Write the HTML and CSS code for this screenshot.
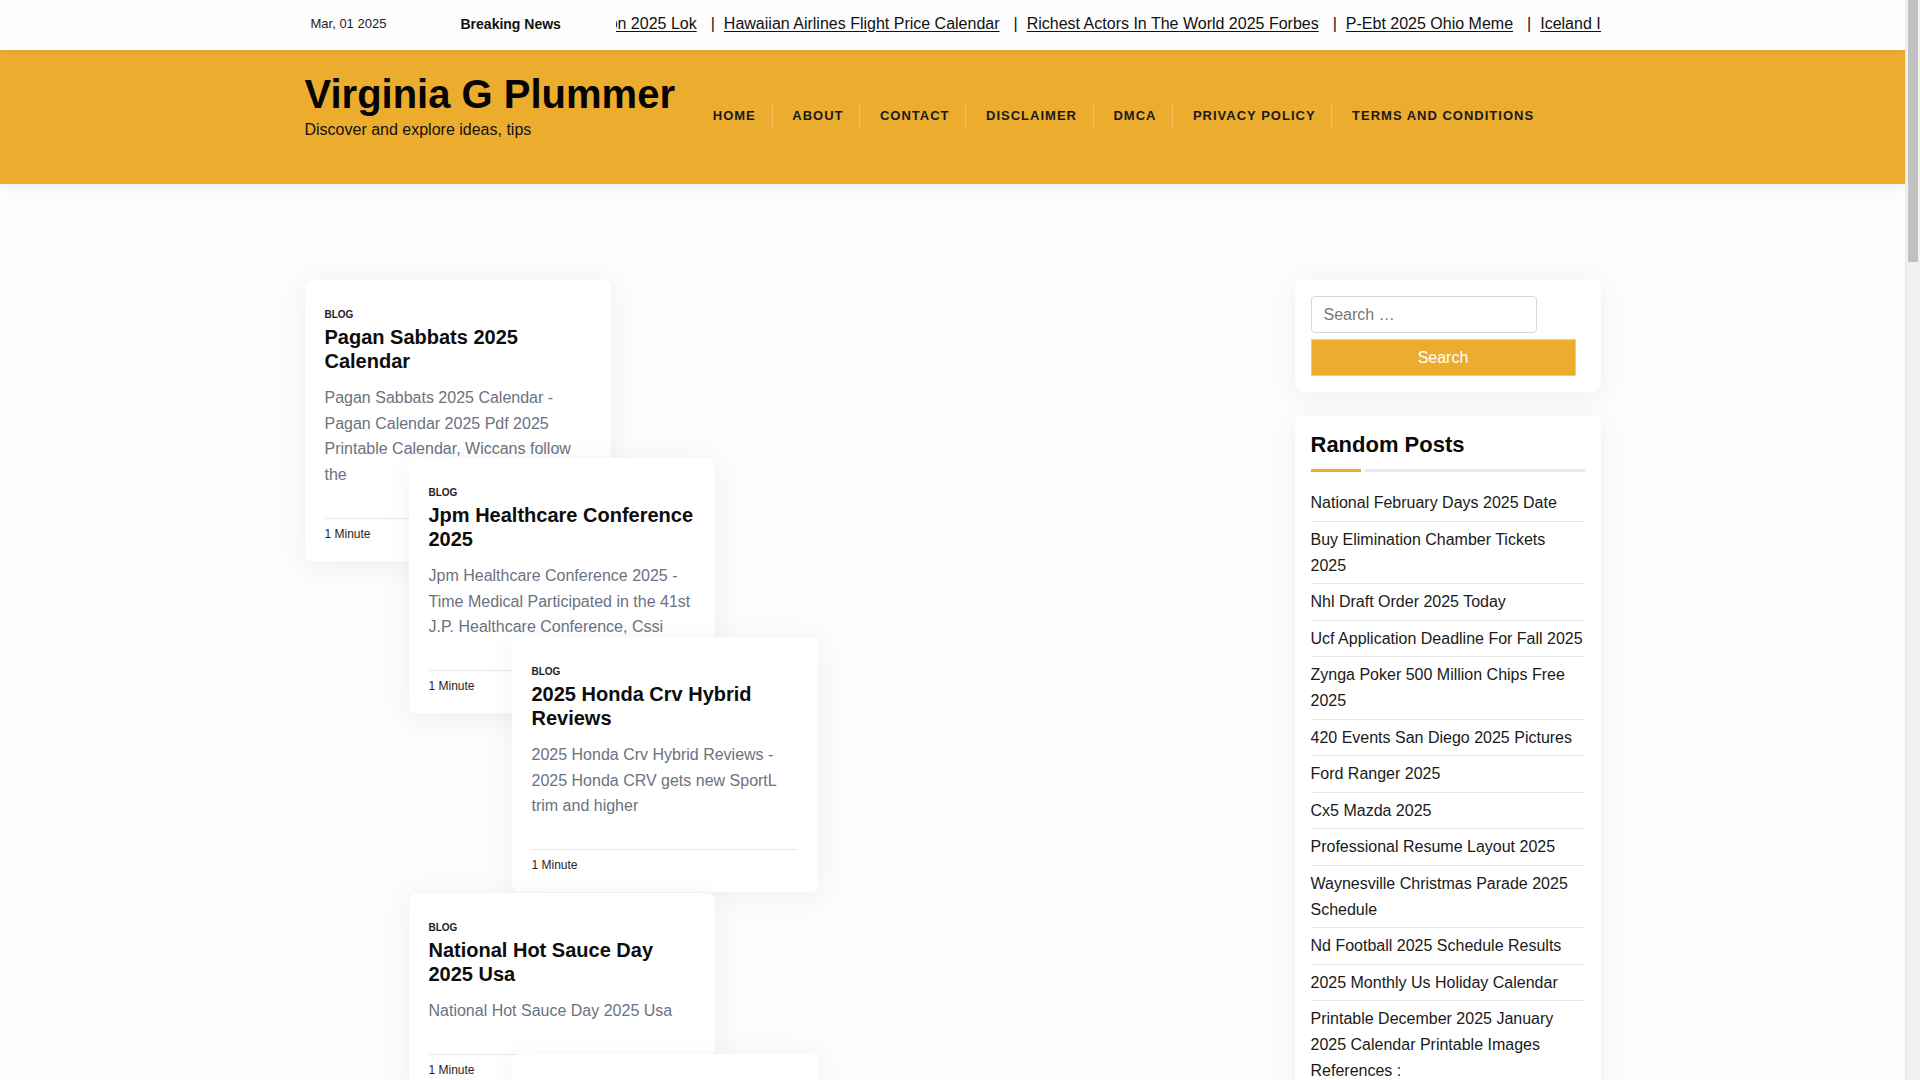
FILE: index.html
```html
<!DOCTYPE html>
<html lang="en">
<head>
<meta charset="utf-8">
<title>Virginia G Plummer</title>
<link rel="stylesheet" href="styles.css">
</head>
<body>
<div class="topbar">
  <div class="container topbar-inner">
    <div class="date">Mar, 01 2025</div>
    <div class="breaking">Breaking News</div>
    <div class="ticker">
      <ul class="ticker-list">
        <li><a href="#">Election 2025 Lok</a><span class="sep">|</span></li>
        <li><a href="#">Hawaiian Airlines Flight Price Calendar</a><span class="sep">|</span></li>
        <li><a href="#">Richest Actors In The World 2025 Forbes</a><span class="sep">|</span></li>
        <li><a href="#">P-Ebt 2025 Ohio Meme</a><span class="sep">|</span></li>
        <li><a href="#">Iceland In Winter 2025</a><span class="sep">|</span></li>
      </ul>
    </div>
  </div>
</div>

<header class="site-header">
  <div class="container header-inner">
    <div class="branding">
      <h1 class="site-title"><a href="#">Virginia G Plummer</a></h1>
      <p class="tagline">Discover and explore ideas, tips</p>
    </div>
    <nav class="main-nav">
      <ul class="menu">
        <li><a href="#">Home</a></li>
        <li><a href="#">About</a></li>
        <li><a href="#">Contact</a></li>
        <li><a href="#">Disclaimer</a></li>
        <li><a href="#">DMCA</a></li>
        <li><a href="#">Privacy Policy</a></li>
        <li><a href="#">Terms and Conditions</a></li>
      </ul>
    </nav>
  </div>
</header>

<div class="container content">
  <main class="posts">
    <article class="card card-1">
      <div class="cat">Blog</div>
      <h2 class="card-title"><a href="#">Pagan Sabbats 2025 Calendar</a></h2>
      <p class="excerpt">Pagan Sabbats 2025 Calendar - Pagan Calendar 2025 Pdf 2025 Printable Calendar, Wiccans follow the</p>
      <div class="card-foot">1 Minute</div>
    </article>
    <article class="card card-2">
      <div class="cat">Blog</div>
      <h2 class="card-title"><a href="#">Jpm Healthcare Conference 2025</a></h2>
      <p class="excerpt">Jpm Healthcare Conference 2025 - Time Medical Participated in the 41st J.P. Healthcare Conference, Cssi</p>
      <div class="card-foot">1 Minute</div>
    </article>
    <article class="card card-3">
      <div class="cat">Blog</div>
      <h2 class="card-title"><a href="#">2025 Honda Crv Hybrid Reviews</a></h2>
      <p class="excerpt">2025 Honda Crv Hybrid Reviews - 2025 Honda CRV gets new SportL trim and higher</p>
      <div class="card-foot">1 Minute</div>
    </article>
    <article class="card card-4">
      <div class="cat">Blog</div>
      <h2 class="card-title"><a href="#">National Hot Sauce Day 2025 Usa</a></h2>
      <p class="excerpt">National Hot Sauce Day 2025 Usa</p>
      <div class="card-foot">1 Minute</div>
    </article>
    <article class="card card-5">
      <div class="cat">Blog</div>
      <h2 class="card-title"><a href="#">Best Time To Visit Japan 2025</a></h2>
      <p class="excerpt">Best Time To Visit Japan 2025 - Cherry blossom forecast and travel tips for the</p>
      <div class="card-foot">1 Minute</div>
    </article>
  </main>

  <aside class="sidebar">
    <section class="widget search-widget">
      <form class="search-form">
        <input class="search-field" type="search" placeholder="Search …">
        <button class="search-submit" type="button">Search</button>
      </form>
    </section>
    <section class="widget posts-widget">
      <h2 class="widget-title">Random Posts</h2>
      <div class="title-bar"><span class="bar-accent"></span><span class="bar-rest"></span></div>
      <ul class="post-list">
        <li><a href="#">National February Days 2025 Date</a></li>
        <li><a href="#">Buy Elimination Chamber Tickets 2025</a></li>
        <li><a href="#">Nhl Draft Order 2025 Today</a></li>
        <li><a href="#">Ucf Application Deadline For Fall 2025</a></li>
        <li><a href="#">Zynga Poker 500 Million Chips Free 2025</a></li>
        <li><a href="#">420 Events San Diego 2025 Pictures</a></li>
        <li><a href="#">Ford Ranger 2025</a></li>
        <li><a href="#">Cx5 Mazda 2025</a></li>
        <li><a href="#">Professional Resume Layout 2025</a></li>
        <li><a href="#">Waynesville Christmas Parade 2025 Schedule</a></li>
        <li><a href="#">Nd Football 2025 Schedule Results</a></li>
        <li><a href="#">2025 Monthly Us Holiday Calendar</a></li>
        <li><a href="#">Printable December 2025 January 2025 Calendar Printable Images References :</a></li>
        <li><a href="#">Chinese New Year 2025 Animal</a></li>
      </ul>
    </section>
  </aside>
</div>

<div class="fake-scrollbar"><div class="fake-thumb"></div></div>
</body>
</html>
```

FILE: styles.css
```css
* {
  box-sizing: border-box;
}

html {
  scrollbar-width: none;
}

html::-webkit-scrollbar {
  display: none;
}

html, body {
  margin: 0;
  padding: 0;
}

body {
  background: #fcfcfc;
  color: #222;
  font-family: "Liberation Sans", Arial, Helvetica, sans-serif;
  font-size: 16px;
  padding-right: 15px;
}

a {
  color: inherit;
  text-decoration: none;
}

ul {
  list-style: none;
  margin: 0;
  padding: 0;
}

.container {
  width: 1296px;
  margin: 0 auto;
}

/* ---------- window scrollbar (drawn) ---------- */
.fake-scrollbar {
  position: fixed;
  top: 0;
  right: 0;
  width: 15px;
  height: 100vh;
  background: #f1f1f1;
  border-left: 1px solid #e8e8e8;
  z-index: 10;
}

.fake-thumb {
  margin: 0 2px 0 2px;
  height: 262px;
  background: #c1c1c1;
}

/* ---------- top bar ---------- */
.topbar {
  background: #fdfdfd;
  height: 50px;
  position: relative;
  z-index: 2;
  box-shadow: 0 1px 4px rgba(0, 0, 0, 0.06);
}

.topbar-inner {
  display: flex;
  align-items: center;
  height: 47px;
}

.date {
  width: 156px;
  padding-left: 6px;
  font-size: 13px;
  color: #222;
  flex-shrink: 0;
}

.breaking {
  width: 155px;
  font-size: 14px;
  font-weight: 700;
  color: #111;
  flex-shrink: 0;
}

.ticker {
  flex: 1;
  overflow: hidden;
  white-space: nowrap;
}

.ticker-list {
  display: flex;
  transform: translateX(-46px);
}

.ticker-list li {
  display: flex;
  align-items: center;
  flex-shrink: 0;
  font-size: 16px;
  color: #111;
}

.ticker-list a {
  text-decoration: underline;
  text-underline-offset: 2px;
}

.sep {
  margin: 0 9px 0 14px;
}

/* ---------- header ---------- */
.site-header {
  background: #ecac2e;
  position: relative;
  z-index: 1;
  box-shadow: 0 3px 10px rgba(0, 0, 0, 0.06);
}

.header-inner {
  display: flex;
  align-items: center;
  height: 134px;
}

.branding {
  padding-bottom: 23px;
}

.site-title {
  margin: 0;
  font-size: 40px;
  line-height: 48px;
  font-weight: 700;
  color: #050505;
}

.tagline {
  margin: 0;
  font-size: 16px;
  line-height: 24px;
  color: #111;
}

.main-nav {
  margin-left: 18px;
  padding-bottom: 3px;
}

.menu {
  display: flex;
  align-items: center;
}

.menu li {
  height: 25px;
  display: flex;
  align-items: center;
  padding: 0 15.75px 0 19.75px;
  border-left: 1px solid rgba(255, 255, 255, 0.25);
}

.menu li:first-child {
  border-left: 0;
}

.menu a {
  font-size: 13px;
  font-weight: 700;
  letter-spacing: 1px;
  text-transform: uppercase;
  color: #1a1a1a;
}

/* ---------- content ---------- */
.content {
  display: flex;
  justify-content: space-between;
  align-items: flex-start;
  margin-top: 96px;
  padding-bottom: 80px;
}

.posts {
  display: grid;
  grid-template-columns: 104px 103px 99px 104px 103px;
  grid-template-rows: 178px 179px 256px 161px auto;
}

.card {
  align-self: start;
  background: #fff;
  border-radius: 8px;
  box-shadow: 0 4px 30px rgba(0, 0, 0, 0.055);
  padding: 27px 20px 18px;
}

.card-1 { grid-column: 1 / 4; grid-row: 1; }
.card-2 { grid-column: 2 / 5; grid-row: 2; }
.card-3 { grid-column: 3 / 6; grid-row: 3; }
.card-4 { grid-column: 2 / 5; grid-row: 4; }
.card-5 { grid-column: 3 / 6; grid-row: 5; }

.cat {
  font-size: 10px;
  line-height: 15px;
  font-weight: 700;
  text-transform: uppercase;
  color: #1e1e1e;
}

.card-title {
  margin: 3px 0 0;
  font-size: 20px;
  line-height: 24px;
  font-weight: 700;
  color: #0d0d0d;
}

.excerpt {
  margin: 12px 0 0;
  font-size: 16px;
  line-height: 25.6px;
  color: #6b7280;
}

.card-foot {
  margin-top: 30.6px;
  border-top: 1px solid #e8e8e8;
  padding-top: 6px;
  font-size: 12px;
  line-height: 18px;
  color: #1e1e1e;
}

/* ---------- sidebar ---------- */
.sidebar {
  width: 306px;
  flex-shrink: 0;
  display: flex;
  flex-direction: column;
  gap: 24px;
}

.widget {
  background: #fff;
  border-radius: 8px;
  box-shadow: 0 4px 30px rgba(0, 0, 0, 0.05);
  padding: 16px;
}

.search-form {
  display: flex;
  flex-direction: column;
  gap: 6px;
}

.search-field {
  width: 226px;
  height: 37px;
  border: 1px solid #d4d6db;
  border-radius: 4px;
  padding: 0 12px;
  font-family: inherit;
  font-size: 16px;
  color: #333;
  background: #fff;
  outline: none;
}

.search-field::placeholder {
  color: #777;
}

.search-submit {
  width: 265px;
  height: 37px;
  background: #ecac2e;
  border: 1px solid #cfcfcf;
  color: #fff;
  font-family: inherit;
  font-size: 16px;
  padding: 0;
  cursor: pointer;
}

.posts-widget {
  padding-top: 16px;
}

.widget-title {
  margin: 0;
  font-size: 22px;
  line-height: 26.4px;
  font-weight: 700;
  color: #0a0a0a;
}

.title-bar {
  display: flex;
  gap: 4px;
  margin-top: 11px;
  height: 3px;
}

.bar-accent {
  width: 50px;
  background: #ecac2e;
}

.bar-rest {
  flex: 1;
  background: #e9e9e9;
}

.post-list {
  margin-top: 13px;
}

.post-list li {
  padding: 5px 0;
  border-bottom: 1px solid #e6e6e6;
  font-size: 16px;
  line-height: 25.6px;
  color: #1a1a1a;
}
```
